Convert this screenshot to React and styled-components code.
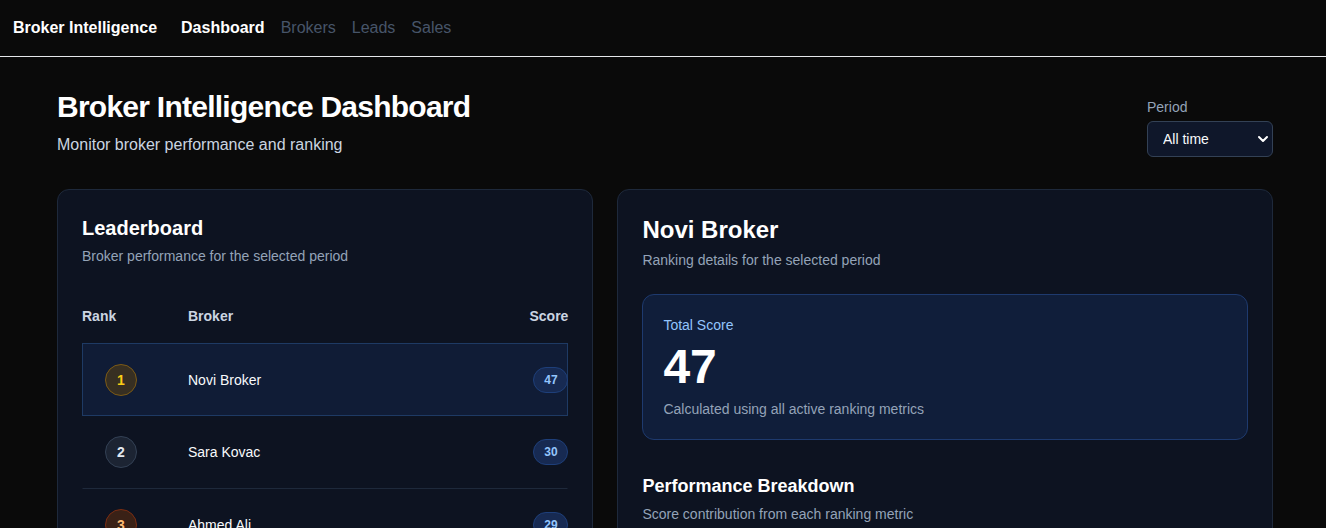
import React, { useState } from 'react'
import styled, { createGlobalStyle } from 'styled-components'

const GlobalStyle = createGlobalStyle`
	* { box-sizing: border-box; }
	html, body {
		margin     : 0;
		padding    : 0;
		background : #0a0a0a;
		font-family: "Liberation Sans", Arial, sans-serif;
		color      : #f8fafc;
	}
`

const Nav = styled.nav`
	height       : 57px;
	display      : flex;
	align-items  : center;
	gap          : 24px;
	padding      : 0 13px 1px;
	border-bottom: 1px solid #e5e7eb;
`

const Brand = styled.span`
	font-size  : 16px;
	font-weight: 700;
	color      : #ffffff;
`

const NavLinks = styled.div`
	display: flex;
	gap    : 16px;
`

const NavLink = styled.a`
	font-size      : 16px;
	font-weight    : ${p => (p.$active ? 700 : 400)};
	color          : ${p => (p.$active ? '#ffffff' : '#475569')};
	text-decoration: none;
	cursor         : pointer;
`

const Main = styled.main`
	width  : 1216px;
	margin : 0 0 0 57px;
	padding: 32px 0 0;
`

const Header = styled.header`
	display        : flex;
	justify-content: space-between;
	align-items    : flex-end;
`

const PageTitle = styled.h1`
	margin        : 0;
	font-size     : 30px;
	line-height   : 36px;
	font-weight   : 700;
	letter-spacing: -0.75px;
	color         : #ffffff;
`

const PageSub = styled.p`
	margin     : 8px 0 0;
	font-size  : 16px;
	line-height: 24px;
	color      : #cbd5e1;
`

const PeriodBox = styled.div`
	display       : flex;
	flex-direction: column;
	gap           : 4px;
`

const Label = styled.label`
	font-size  : 14px;
	line-height: 20px;
	color      : #94a3b8;
`

const SelectWrap = styled.div`
	position: relative;
	width   : 126px;
`

const Select = styled.select`
	appearance   : none;
	width        : 100%;
	height       : 36px;
	padding      : 0 28px 0 15px;
	background   : #0f172a;
	border       : 1px solid #334155;
	border-radius: 6px;
	color        : #f8fafc;
	font-family  : inherit;
	font-size    : 14px;
	outline      : none;
`

const Chevron = styled.svg`
	position      : absolute;
	right         : 4px;
	top           : 13px;
	pointer-events: none;
`

const Grid = styled.div`
	margin-top           : 32px;
	display              : grid;
	grid-template-columns: 9fr 11fr;
	gap                  : 24px;
	align-items          : start;
`

const Card = styled.section`
	background   : #0d1321;
	border       : 1px solid #1e293b;
	border-radius: 12px;
	padding      : 24px;
	min-height   : 400px;
`

const CardTitle = styled.h2`
	margin     : 0;
	font-size  : ${p => p.$size || 20}px;
	line-height: ${p => (p.$size === 24 ? 32 : 28)}px;
	font-weight: 700;
	color      : #ffffff;
`

const CardSub = styled.p`
	margin     : 4px 0 0;
	font-size  : 14px;
	line-height: 20px;
	color      : #94a3b8;
`

const TableHead = styled.div`
	margin-top           : 28px;
	padding              : 12px 0 17px;
	display              : grid;
	grid-template-columns: 106px 1fr auto;
	font-size            : 14px;
	line-height          : 20px;
	font-weight          : 700;
	color                : #cbd5e1;
`

const Row = styled.div`
	height               : 73px;
	display              : grid;
	grid-template-columns: 105px 1fr auto;
	align-items          : center;
	border               : 1px solid transparent;
	border-bottom-color  : #1e293b;
	background           : ${p => (p.$selected ? '#101c36' : 'transparent')};
	${p => p.$selected && 'border-color: #1e3a64;'}
	cursor               : pointer;

	& + & {
		border-top: 0;
	}
`

const rankColors = {
	1: { bg: '#372f22', border: '#7c5a16', color: '#facc15' },
	2: { bg: '#1c2433', border: '#334155', color: '#e2e8f0' },
	3: { bg: '#3a2116', border: '#7c2d12', color: '#fdba74' },
}

const RankBadge = styled.span`
	margin-left    : 22px;
	width          : 32px;
	height         : 32px;
	border-radius  : 50%;
	display        : flex;
	align-items    : center;
	justify-content: center;
	font-size      : 14px;
	font-weight    : 700;
	background     : ${p => rankColors[p.$rank].bg};
	border         : 1px solid ${p => rankColors[p.$rank].border};
	color          : ${p => rankColors[p.$rank].color};
`

const Name = styled.span`
	font-size: 14px;
	color    : #f8fafc;
`

const ScorePill = styled.span`
	margin-right   : -1px;
	min-width      : 35px;
	height         : 26px;
	padding        : 0 9px;
	border-radius  : 999px;
	display        : flex;
	align-items    : center;
	justify-content: center;
	font-size      : 12px;
	font-weight    : 700;
	color          : #93c5fd;
	background     : #172a52;
	border         : 1px solid #1e3f7a;
`

const ScoreBox = styled.div`
	margin-top   : 24px;
	padding      : 20px;
	background   : #101e3a;
	border       : 1px solid #1e3a6e;
	border-radius: 12px;
`

const ScoreLabel = styled.div`
	font-size  : 14px;
	line-height: 20px;
	color      : #93c5fd;
`

const ScoreValue = styled.div`
	margin-top : 8px;
	font-size  : 48px;
	line-height: 48px;
	font-weight: 700;
	color      : #ffffff;
`

const ScoreNote = styled.div`
	margin-top : 8px;
	font-size  : 14px;
	line-height: 20px;
	color      : #94a3b8;
`

const SectionTitle = styled.h3`
	margin     : 32px 0 0;
	font-size  : 18px;
	line-height: 28px;
	font-weight: 700;
	color      : #ffffff;
`

const brokers = [
	{ rank: 1, name: 'Novi Broker', score: 47 },
	{ rank: 2, name: 'Sara Kovac', score: 30 },
	{ rank: 3, name: 'Ahmed Ali', score: 29 },
]

export default function App() {
	const [selected, setSelected] = useState(1)
	const current = brokers.find(b => b.rank === selected)

	return (
		<>
			<GlobalStyle />
			<Nav>
				<Brand>Broker Intelligence</Brand>
				<NavLinks>
					<NavLink $active>Dashboard</NavLink>
					<NavLink>Brokers</NavLink>
					<NavLink>Leads</NavLink>
					<NavLink>Sales</NavLink>
				</NavLinks>
			</Nav>

			<Main>
				<Header>
					<div>
						<PageTitle>Broker Intelligence Dashboard</PageTitle>
						<PageSub>Monitor broker performance and ranking</PageSub>
					</div>
					<PeriodBox>
						<Label htmlFor="period">Period</Label>
						<SelectWrap>
							<Select id="period" defaultValue="all">
								<option value="all">All time</option>
								<option value="month">This month</option>
								<option value="week">This week</option>
							</Select>
							<Chevron width="12" height="10" viewBox="0 0 12 10" fill="none">
								<path d="M2 3l4 4 4-4" stroke="#ffffff" strokeWidth="2" strokeLinecap="round" strokeLinejoin="round" />
							</Chevron>
						</SelectWrap>
					</PeriodBox>
				</Header>

				<Grid>
					<Card>
						<CardTitle>Leaderboard</CardTitle>
						<CardSub>Broker performance for the selected period</CardSub>
						<TableHead>
							<span>Rank</span>
							<span>Broker</span>
							<span>Score</span>
						</TableHead>
						{brokers.map(b => (
							<Row key={b.rank} $selected={b.rank === selected} onClick={() => setSelected(b.rank)}>
								<RankBadge $rank={b.rank}>{b.rank}</RankBadge>
								<Name>{b.name}</Name>
								<ScorePill>{b.score}</ScorePill>
							</Row>
						))}
					</Card>

					<Card>
						<CardTitle $size={24}>{current.name}</CardTitle>
						<CardSub>Ranking details for the selected period</CardSub>
						<ScoreBox>
							<ScoreLabel>Total Score</ScoreLabel>
							<ScoreValue>{current.score}</ScoreValue>
							<ScoreNote>Calculated using all active ranking metrics</ScoreNote>
						</ScoreBox>
						<SectionTitle>Performance Breakdown</SectionTitle>
						<CardSub>Score contribution from each ranking metric</CardSub>
					</Card>
				</Grid>
			</Main>
		</>
	)
}
